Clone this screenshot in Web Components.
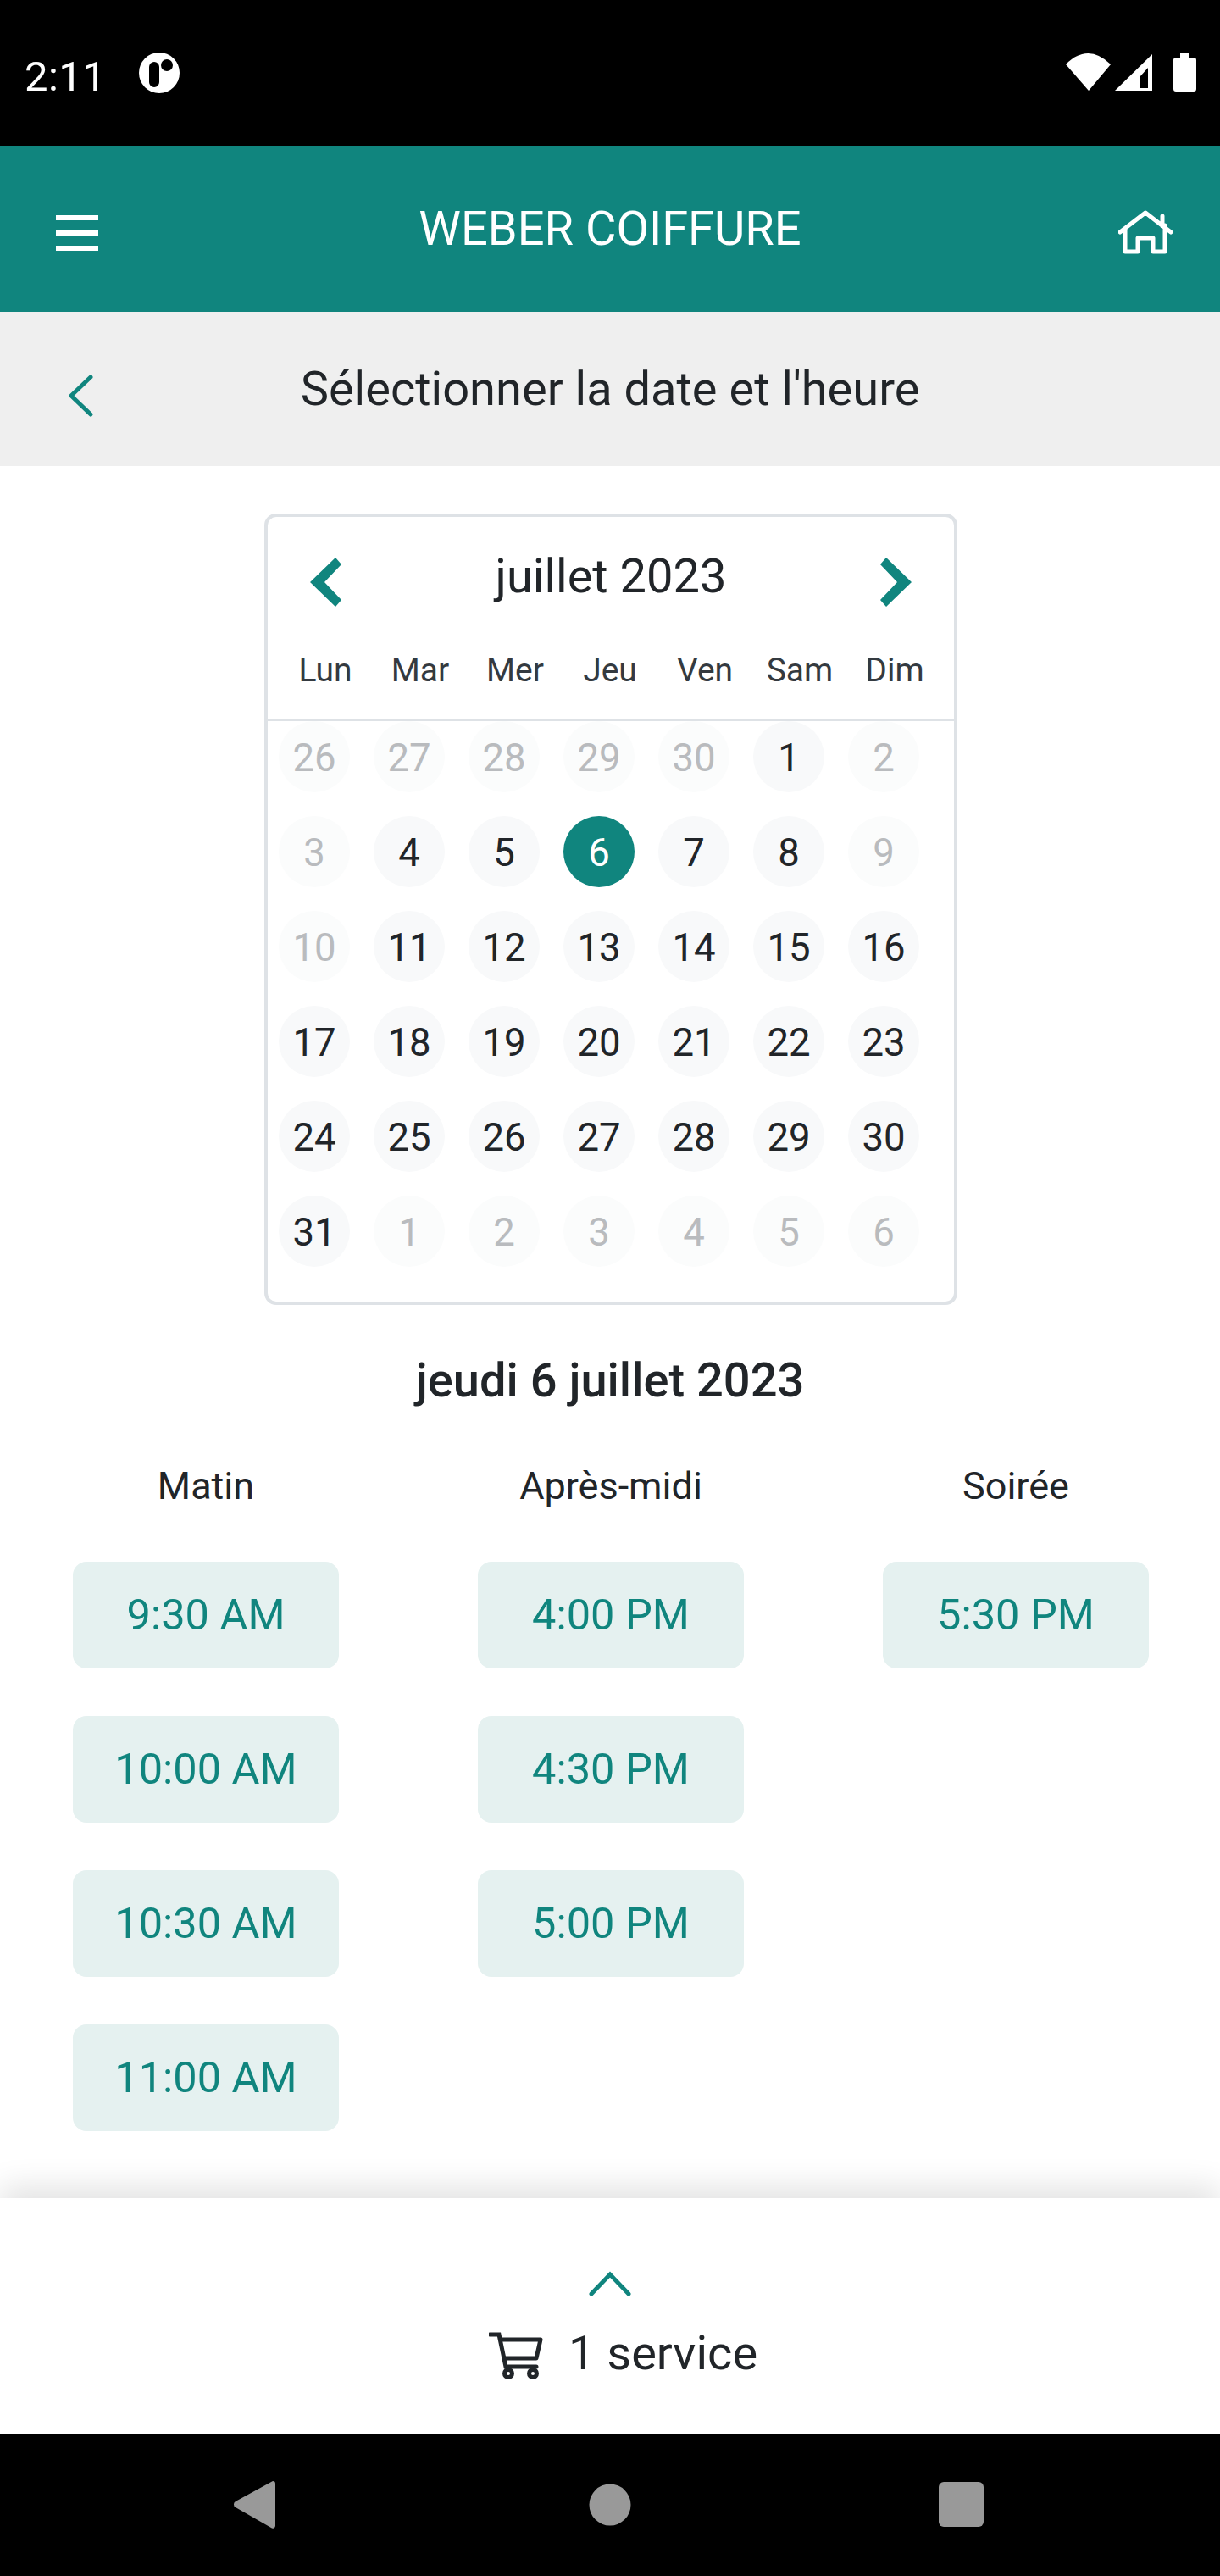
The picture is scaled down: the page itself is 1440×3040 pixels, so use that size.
<!DOCTYPE html>
<html lang="fr"><head><meta charset="utf-8"><title>Weber Coiffure</title>
<style>
html,body{margin:0;padding:0;background:#fff}
body{font-family:Roboto,"Liberation Sans",sans-serif;color:#212529;width:1440px;height:3040px;display:flex;flex-direction:column;overflow:hidden}
</style></head><body>
<status-bar></status-bar>
<app-bar title="WEBER COIFFURE"></app-bar>
<sub-header>Sélectionner la date et l'heure</sub-header>
<booking-main>
  <month-calendar></month-calendar>
  <date-title>jeudi 6 juillet 2023</date-title>
  <time-grid>
    <time-column label="Matin"><time-slot>9:30 AM</time-slot><time-slot>10:00 AM</time-slot><time-slot>10:30 AM</time-slot><time-slot>11:00 AM</time-slot></time-column>
    <time-column label="Après-midi"><time-slot>4:00 PM</time-slot><time-slot>4:30 PM</time-slot><time-slot>5:00 PM</time-slot></time-column>
    <time-column label="Soirée"><time-slot>5:30 PM</time-slot></time-column>
  </time-grid>
</booking-main>
<cart-panel>1 service</cart-panel>
<nav-bar></nav-bar>
<script>
const def=(name,html,init)=>customElements.define(name,class extends HTMLElement{
  connectedCallback(){ if(this.shadowRoot) return; const r=this.attachShadow({mode:'open'});
    r.innerHTML=typeof html==='function'?html(this):html; }
});
const TEAL='#10857e';
def('status-bar',`<style>
:host{display:flex;box-sizing:border-box;height:172px;background:#000;color:#fff;align-items:flex-start;padding:0 28px 0 29px;flex:none}
.t{font:400 49px/1 Roboto,sans-serif;margin-top:66px;width:135px;letter-spacing:.4px}
.o{margin-top:62px}.s{flex:1}.r{margin-top:63px}svg{display:block}
</style><div class="t">2:11</div>
<svg class="o" width="48" height="48" viewBox="0 0 48 48"><circle cx="24" cy="24" r="24" fill="#fff"/><rect x="12" y="11" width="12" height="30" rx="6" fill="#000"/><circle cx="33" cy="15" r="7" fill="#000"/></svg>
<div class="s"></div>
<svg class="r" width="154" height="46" viewBox="0 0 154 46"><path d="M0 13Q26-13 53 13L27 44Z" fill="#fff"/><path d="M58 44 102 1V44Z" fill="#fff"/><path d="M88 41h9V17l-9 10Z" fill="#000"/><path d="M135 0h11v5h5a3 3 0 0 1 3 3v34a3 3 0 0 1-3 3h-21a3 3 0 0 1-3-3V8a3 3 0 0 1 3-3h5Z" fill="#fff"/></svg>`);
def('app-bar',t=>`<style>
:host{display:flex;align-items:center;justify-content:space-between;box-sizing:border-box;height:196px;background:${TEAL};color:#fff;padding:0 56px 0 66px;position:relative;flex:none}
.t{position:absolute;left:0;right:0;text-align:center;top:70px;font:400 56px/1 Roboto,sans-serif}
svg{display:block;position:relative}
</style>
<svg width="50" height="42" viewBox="0 0 50 42" style="margin-top:9px"><path d="M0 0h50v6H0zM0 18h50v6H0zM0 36h50v6H0z" fill="#fff" /></svg>
<div class="t">${t.getAttribute('title')}</div>
<svg width="64" height="52" viewBox="0 0 64 52" fill="none" stroke="#fff" stroke-width="5" stroke-linecap="round" stroke-linejoin="round" style="margin-top:8px"><path d="M2 26 32 3l22 17M52 19V7M62 26l-8-6M8 22v27h15V33h18v16h14V18" /></svg>`);
def('sub-header',`<style>
:host{display:flex;align-items:center;justify-content:center;box-sizing:border-box;height:182px;background:#efefef;position:relative;flex:none;font:400 56px/1 Roboto,sans-serif;color:#212529}
span{display:block;margin-top:0}
svg{position:absolute;left:80px;top:74px}
</style><svg width="30" height="50" viewBox="0 0 30 50" fill="none" stroke="${TEAL}" stroke-width="5" stroke-linecap="round" stroke-linejoin="round"><path d="M27 3 4 25l23 22"/></svg><span><slot></slot></span>`);
def('booking-main',`<style>:host{display:flex;flex-direction:column;align-items:center;flex:1;min-height:0;padding-top:56px;box-sizing:border-box;background:#fff}</style><slot></slot>`);
const grey='#b9bbbe';
const days=[];
[[26,0],[27,0],[28,0],[29,0],[30,0],[1,1],[2,0],[3,0],[4,1],[5,1],[6,2],[7,1],[8,1],[9,0],[10,0]].forEach(d=>days.push(d));
for(let i=11;i<=31;i++)days.push([i,1]);
[1,2,3,4,5,6].forEach(i=>days.push([i,0]));
def('cal-day',t=>`<style>
:host{display:flex;align-items:center;justify-content:center;width:84px;height:84px;border-radius:50%;margin:0 14px;background:#f8f9fa;color:#212529;font:400 45.5px/1 Roboto,sans-serif}
:host([state="0"]){background:#fbfcfc;color:${grey}}
:host([state="2"]){background:${TEAL};color:#fff}
span{display:block;margin-top:4px}
</style><span><slot></slot></span>`);
def('month-calendar',`<style>
:host{display:block;box-sizing:border-box;width:818px;height:934px;border:4px solid #dee2e6;border-radius:14px;background:#fff;flex:none;margin-left:2px}
.h{display:flex;align-items:center;justify-content:space-between;height:112px;padding:0 50px;position:relative}
.h div{font:400 56px/1 Roboto,sans-serif;position:absolute;left:0;right:0;text-align:center;top:42px;color:#212529}
.h svg{margin-top:42px}
.w{display:grid;grid-template-columns:repeat(7,112px);padding:0 13px 0 12px;height:129px;box-sizing:border-box;border-bottom:3px solid #dee2e6;font:400 39px/1 Roboto,sans-serif;color:#343a40;text-align:center}
.w span{margin-top:50px}
.d{display:grid;grid-template-columns:repeat(7,112px);row-gap:28px;margin-left:-1px}
</style>
<div class="h"><svg width="38" height="58" viewBox="0 0 38 58"><path d="M30 0 37 8 17 29 37 50 30 58 0 29Z" fill="${TEAL}"/></svg><div>juillet 2023</div><svg width="38" height="58" viewBox="0 0 38 58"><path d="M8 0 1 8 21 29 1 50 8 58 38 29Z" fill="${TEAL}"/></svg></div>
<div class="w">${['Lun','Mar','Mer','Jeu','Ven','Sam','Dim'].map(x=>`<span>${x}</span>`).join('')}</div>
<div class="d">${days.map(d=>`<cal-day state="${d[1]}">${d[0]}</cal-day>`).join('')}</div>`);
def('date-title',`<style>:host{display:block;font:500 56px/1 Roboto,sans-serif;color:#212529;margin-top:61px;text-align:center;height:56px}</style><slot></slot>`);
def('time-grid',`<style>:host{display:flex;justify-content:space-between;box-sizing:border-box;width:100%;padding:0 84px 0 86px;margin-top:72px}</style><slot></slot>`);
def('time-column',t=>`<style>
:host{display:flex;flex-direction:column;width:314px;gap:56px}
.l{font:400 45px/1 Roboto,sans-serif;color:#212529;text-align:center;height:58px;padding-top:2px;box-sizing:border-box}
</style><div class="l">${t.getAttribute('label')}</div><slot></slot>`);
def('time-slot',`<style>:host{display:flex;align-items:center;justify-content:center;height:126px;background:#e5f1f0;border-radius:16px;color:${TEAL};font:400 50.5px/1 Roboto,sans-serif}</style><slot></slot>`);
def('cart-panel',`<style>
:host{display:flex;flex-direction:column;align-items:center;box-sizing:border-box;height:278px;background:#fff;flex:none;position:relative;box-shadow:0 -12px 36px rgba(0,0,0,.12);padding-top:86px;z-index:1}
.c{display:flex;align-items:center;margin-top:36px;font:400 56px/1 Roboto,sans-serif;color:#212529;margin-left:31px}
.c svg{margin-right:30px;margin-top:6px}svg{display:block}
</style>
<svg width="50" height="30" viewBox="0 0 50 30" fill="none" stroke="${TEAL}" stroke-width="5" stroke-linecap="round"><path d="M3 27 25 4l22 23"/></svg>
<div class="c"><svg width="64" height="56" viewBox="0 0 64 56" fill="none" stroke="#212529" stroke-width="5"><path d="M1 3h11l8 38h36" stroke-linecap="round"/><path d="M14 9h47l-5 22H18" stroke-linejoin="round"/><circle cx="23" cy="49" r="4.5"/><circle cx="52" cy="49" r="4.5"/></svg><span><slot></slot></span></div>`);
def('nav-bar',`<style>:host{display:block;height:168px;background:#000;flex:none;position:relative;z-index:2}svg{display:block}</style>
<svg width="1440" height="168" viewBox="0 0 1440 168"><path d="M322 56a3 3 0 0 1 3 3v50a3 3 0 0 1-5 2l-42-24a4 4 0 0 1 0-7Z" fill="#999"/><circle cx="720" cy="84" r="24.5" fill="#999"/><rect x="1108" y="57" width="53" height="53" rx="6" fill="#999"/></svg>`);
</script>
</body></html>
